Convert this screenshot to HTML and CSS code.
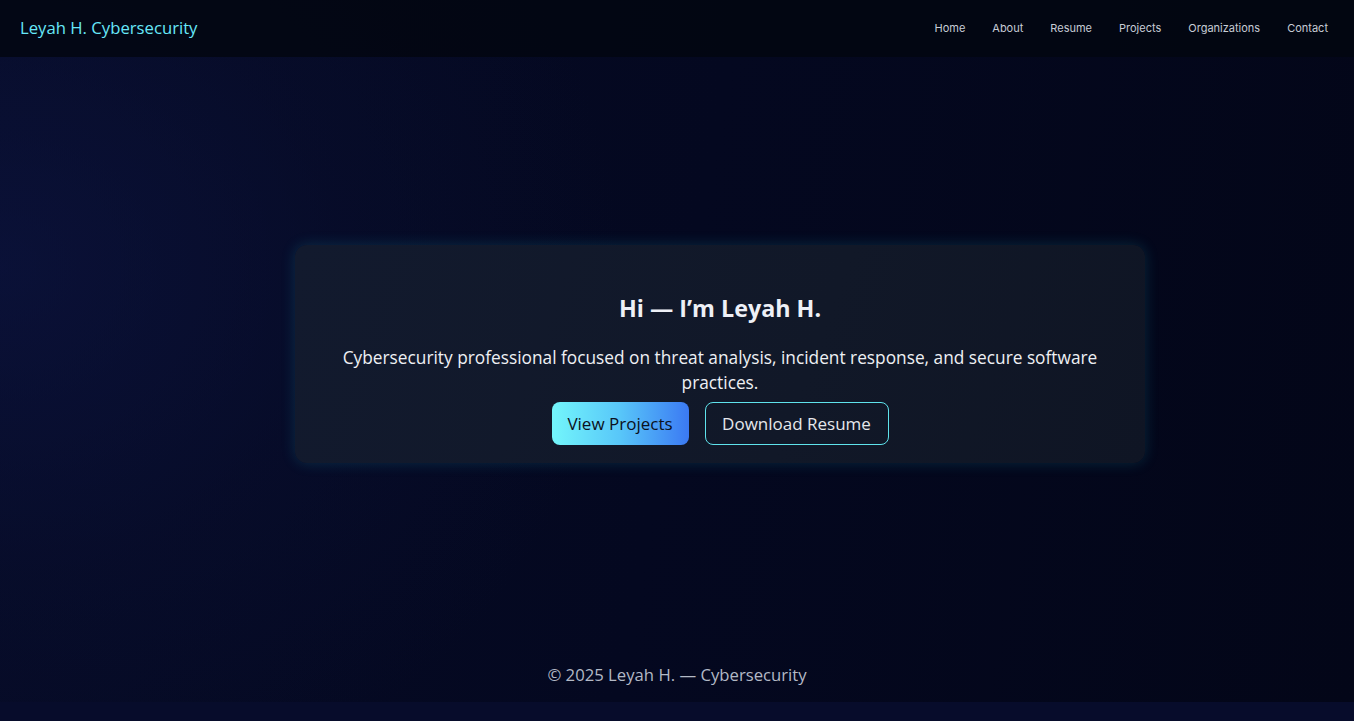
FILE: index.html
```html
<!DOCTYPE html>
<html lang="en">
<head>
<meta charset="utf-8">
<title>Leyah H. Cybersecurity</title>
<link rel="stylesheet" href="styles.css">
</head>
<body>
<div class="page">
  <header class="topbar">
    <a class="brand" href="#">Leyah H. Cybersecurity</a>
    <nav class="nav">
      <a href="#">Home</a>
      <a href="#">About</a>
      <a href="#">Resume</a>
      <a href="#">Projects</a>
      <a href="#">Organizations</a>
      <a href="#">Contact</a>
    </nav>
  </header>
  <main class="hero">
    <section class="card">
      <h1 class="title">Hi — I’m Leyah H.</h1>
      <p class="lead">Cybersecurity professional focused on threat analysis, incident response, and secure software practices.</p>
      <div class="actions">
        <a class="btn btn-primary" href="#">View Projects</a>
        <a class="btn btn-outline" href="#">Download Resume</a>
      </div>
    </section>
  </main>
  <footer class="footer">© 2025 Leyah H. — Cybersecurity</footer>
</div>
</body>
</html>
```
FILE: styles.css
```css
html { background: #070c2b; }
body {
  margin: 0;
  font-family: "Open Sans", "DejaVu Sans", sans-serif;
  color: #e5e7eb;
}
a { text-decoration: none; color: inherit; }
.page {
  min-height: 702px;
  display: flex;
  flex-direction: column;
  background:
    radial-gradient(ellipse 620px 560px at 0% 38%, rgba(14, 22, 70, 0.55) 0%, rgba(10, 16, 52, 0.35) 55%, rgba(6, 10, 34, 0) 100%),
    linear-gradient(100deg, #060b26 0%, #040820 50%, #030618 100%);
}
.topbar {
  height: 57px;
  box-sizing: border-box;
  padding: 0 26px 2px 20px;
  display: flex;
  align-items: center;
  justify-content: space-between;
  background: rgba(3, 6, 16, 0.82);
}
.brand {
  font-family: "Open Sans", sans-serif;
  font-weight: 500;
  font-size: 16.7px;
  color: #67e8f9;
}
.nav {
  display: flex;
  gap: 27px;
}
.nav a {
  font-family: Inter, "Liberation Sans", sans-serif;
  font-size: 11px;
  color: #c7ccd6;
}
.hero {
  flex: 1;
  display: flex;
  align-items: center;
  justify-content: center;
  padding-top: 4px;
  padding-left: 86px;
}
.card {
  width: 850px;
  height: 218px;
  box-sizing: border-box;
  border-radius: 12px;
  background: linear-gradient(110deg, #121a2e 0%, #111828 60%, #0f1524 100%);
  box-shadow: 0 0 14px 1px rgba(30, 195, 210, 0.16);
  display: flex;
  flex-direction: column;
  align-items: center;
  padding: 47px 30px 0;
  text-align: center;
}
.title {
  margin: 0;
  font-family: "Open Sans", sans-serif;
  font-size: 23.3px;
  font-weight: 700;
  line-height: 32px;
  color: #eef0f6;
}
.lead {
  margin: 21px 0 7px;
  font-size: 17.3px;
  font-weight: 500;
  line-height: 25px;
  color: #eef0f4;
  max-width: 790px;
}
.actions {
  display: flex;
  gap: 16px;
}
.btn {
  height: 43px;
  box-sizing: border-box;
  display: inline-flex;
  align-items: center;
  justify-content: center;
  padding: 0 10px;
  border-radius: 8px;
  font-size: 17px;
  font-weight: 400;
  white-space: nowrap;
}
.btn-primary {
  width: 137px;
  color: #0b1020;
  background: linear-gradient(90deg, #73f6fb 0%, #58c6f9 50%, #3b79f3 100%);
}
.btn-outline {
  width: 184px;
  color: #e5e7eb;
  border: 1px solid #5fe3ec;
}
.footer {
  height: 55px;
  display: flex;
  align-items: center;
  justify-content: center;
  padding-top: 0;
  font-size: 16.7px;
  color: #b3b9c6;
}
```
